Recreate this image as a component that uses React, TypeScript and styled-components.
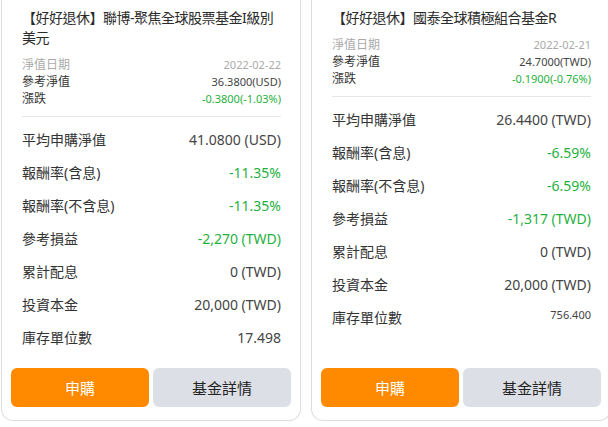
import styled, { createGlobalStyle } from 'styled-components';

const GlobalStyle = createGlobalStyle`
    html, body {
        margin: 0;
        padding: 0;
        background: #ffffff;
        overflow: hidden;
    }
    body {
        font-family: 'Noto Sans', 'Noto Sans CJK TC', sans-serif;
        color: #333333;
    }
`;

type Tone = 'plain' | 'up' | 'down';

interface Fund {
    name: string;
    date: string;
    nav: string;
    change: string;
    rows: { label: string; value: string; tone?: Tone; small?: boolean }[];
}

const FUNDS: Fund[] = [
    {
        name: '【好好退休】聯博-聚焦全球股票基金I級別美元',
        date: '2022-02-22',
        nav: '36.3800(USD)',
        change: '-0.3800(-1.03%)',
        rows: [
            { label: '平均申購淨值', value: '41.0800 (USD)' },
            { label: '報酬率(含息)', value: '-11.35%', tone: 'down' },
            { label: '報酬率(不含息)', value: '-11.35%', tone: 'down' },
            { label: '參考損益', value: '-2,270 (TWD)', tone: 'down' },
            { label: '累計配息', value: '0 (TWD)' },
            { label: '投資本金', value: '20,000 (TWD)' },
            { label: '庫存單位數', value: '17.498' },
        ],
    },
    {
        name: '【好好退休】國泰全球積極組合基金R',
        date: '2022-02-21',
        nav: '24.7000(TWD)',
        change: '-0.1900(-0.76%)',
        rows: [
            { label: '平均申購淨值', value: '26.4400 (TWD)' },
            { label: '報酬率(含息)', value: '-6.59%', tone: 'down' },
            { label: '報酬率(不含息)', value: '-6.59%', tone: 'down' },
            { label: '參考損益', value: '-1,317 (TWD)', tone: 'down' },
            { label: '累計配息', value: '0 (TWD)' },
            { label: '投資本金', value: '20,000 (TWD)' },
            { label: '庫存單位數', value: '756.400', small: true },
        ],
    },
];

const toneColor = (tone?: Tone) => {
    if (tone === 'down') return '#1fb140';
    if (tone === 'up') return '#e53935';
    return '#444444';
};

const App = () => {
    return (
        <>
            <GlobalStyle />
            <Page>
                {FUNDS.map((fund) => (
                    <Card key={fund.name}>
                        <Title>{fund.name}</Title>

                        <Summary>
                            <SummaryRow>
                                <SummaryLabel muted>淨值日期</SummaryLabel>
                                <SummaryValue muted>{fund.date}</SummaryValue>
                            </SummaryRow>
                            <SummaryRow>
                                <SummaryLabel>參考淨值</SummaryLabel>
                                <SummaryValue>{fund.nav}</SummaryValue>
                            </SummaryRow>
                            <SummaryRow>
                                <SummaryLabel>漲跌</SummaryLabel>
                                <SummaryValue tone="down">{fund.change}</SummaryValue>
                            </SummaryRow>
                        </Summary>

                        <Divider />

                        <Details>
                            {fund.rows.map((row) => (
                                <DetailRow key={row.label}>
                                    <DetailLabel>{row.label}</DetailLabel>
                                    <DetailValue tone={row.tone} small={row.small}>
                                        {row.value}
                                    </DetailValue>
                                </DetailRow>
                            ))}
                        </Details>

                        <Actions>
                            <ActionButton variant="primary">申購</ActionButton>
                            <ActionButton variant="secondary">基金詳情</ActionButton>
                        </Actions>
                    </Card>
                ))}
            </Page>
        </>
    );
};

export default App;

const Page = styled.div`
    display: flex;
    gap: 10px;
    width: 100%;
    padding-left: 1px;
    box-sizing: border-box;
    overflow: hidden;
`;

const Card = styled.div`
    display: flex;
    flex-direction: column;
    flex: 0 0 300px;
    box-sizing: border-box;
    background: #ffffff;
    border: 1px solid #dedede;
    border-top: none;
    border-radius: 0 0 12px 12px;
    padding: 8px 0 13px;
`;

const Title = styled.div`
    padding: 0 19px 0 20px;
    font-size: 14px;
    line-height: 20px;
    letter-spacing: -0.5px;
    font-weight: 400;
    color: #2b2b2b;
`;

const Summary = styled.div`
    display: flex;
    flex-direction: column;
    margin-top: 8px;
    padding: 0 19px 0 20px;
`;

const SummaryRow = styled.div`
    display: flex;
    justify-content: space-between;
    align-items: center;
    height: 17px;
`;

const SummaryLabel = styled.span<{ muted?: boolean }>`
    font-size: 12px;
    line-height: 17px;
    color: ${({ muted }) => (muted ? '#aaaaaa' : '#333333')};
`;

const SummaryValue = styled.span<{ muted?: boolean; tone?: Tone }>`
    font-size: 11px;
    line-height: 17px;
    color: ${({ muted, tone }) => (muted ? '#aaaaaa' : toneColor(tone))};
`;

const Divider = styled.div`
    height: 1px;
    margin: 9px 19px 0 20px;
    background: #e6e6e6;
`;

const Details = styled.div`
    display: flex;
    flex-direction: column;
    margin-top: 6px;
    padding: 0 19px 0 20px;
`;

const DetailRow = styled.div`
    display: flex;
    justify-content: space-between;
    align-items: center;
    height: 33px;
`;

const DetailLabel = styled.span`
    font-size: 14px;
    line-height: 20px;
    color: #333333;
`;

const DetailValue = styled.span<{ tone?: Tone; small?: boolean }>`
    font-size: ${({ small }) => (small ? '11px' : '14px')};
    line-height: 20px;
    color: ${({ tone }) => toneColor(tone)};
    align-self: ${({ small }) => (small ? 'flex-start' : 'center')};
    padding-top: ${({ small }) => (small ? '4px' : '0')};
`;

const Actions = styled.div`
    display: flex;
    gap: 4px;
    margin-top: auto;
    padding: 14px 9px 0;
`;

const ActionButton = styled.button<{ variant: 'primary' | 'secondary' }>`
    flex: 1;
    height: 39px;
    border: none;
    border-radius: 6px;
    font-family: 'Noto Sans', 'Noto Sans CJK TC', sans-serif;
    font-size: 15px;
    cursor: pointer;
    background: ${({ variant }) => (variant === 'primary' ? '#ff8a00' : '#dcdfe6')};
    color: ${({ variant }) => (variant === 'primary' ? '#ffffff' : '#222222')};
`;
